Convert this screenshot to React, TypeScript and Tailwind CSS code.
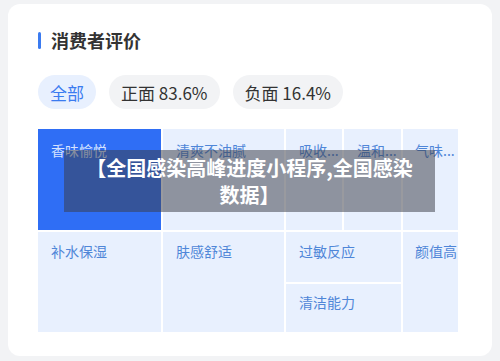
export default function App() {
  const font = { fontFamily: '"Noto Sans CJK SC", "Noto Sans", sans-serif' };
  return (
    <div className="w-[500px] h-[361px] bg-[#f2f3f5] pt-[4px] px-[8px] overflow-hidden" style={font}>
      <div className="relative w-[484px] h-[352px] bg-white rounded-[12px] pl-[30px] pt-[24px]">
        {/* Title */}
        <div className="flex items-center gap-[10px] h-[24px]">
          <span className="w-[3px] h-[17px] rounded-full bg-[#3b7bf0]" />
          <span className="text-[18px] font-semibold text-[#333] leading-none">消费者评价</span>
        </div>

        {/* Filter chips */}
        <div className="flex gap-[13px] mt-[23px] text-[17px] leading-none">
          <span className="h-[34px] px-[12px] flex items-center rounded-full bg-[#e8f0fe] text-[#3b7bf0]">全部</span>
          <span className="h-[34px] px-[12px] flex items-center rounded-full bg-[#f2f3f5] text-[#333]">正面 83.6%</span>
          <span className="h-[34px] px-[12px] flex items-center rounded-full bg-[#f2f3f5] text-[#333]">负面 16.4%</span>
        </div>

        {/* Treemap */}
        <div className="mt-[20px] w-[421px] h-[204px] grid grid-cols-[123px_121px_56px_57px_55px] grid-rows-[101px_50px_48px] gap-[2px] text-[14px] leading-none text-[#4f86d8]">
          <div className="bg-[#2f6ef5] text-[#d6e3ff] pl-[13px] pt-[14px]">香味愉悦</div>
          <div className="bg-[#e8f0fe] pl-[13px] pt-[14px]">清爽不油腻</div>
          <div className="bg-[#e8f0fe] pl-[13px] pt-[14px] whitespace-nowrap overflow-hidden">吸收...</div>
          <div className="bg-[#e8f0fe] pl-[13px] pt-[14px] whitespace-nowrap overflow-hidden">温和...</div>
          <div className="bg-[#e8f0fe] pl-[12px] pt-[14px] whitespace-nowrap overflow-hidden">气味...</div>
          <div className="row-span-2 bg-[#e8f0fe] pl-[13px] pt-[12px]">补水保湿</div>
          <div className="row-span-2 bg-[#e8f0fe] pl-[13px] pt-[12px]">肤感舒适</div>
          <div className="col-span-2 bg-[#e8f0fe] pl-[13px] pt-[12px]">过敏反应</div>
          <div className="row-span-2 bg-[#e8f0fe] pl-[12px] pt-[12px] whitespace-nowrap">颜值高</div>
          <div className="col-span-2 bg-[#e8f0fe] pl-[13px] pt-[11px]">清洁能力</div>
        </div>

        {/* Overlay caption */}
        <div className="absolute left-[56px] top-[146px] w-[371px] h-[62px] bg-[rgba(60,62,70,0.52)] flex items-center justify-center">
          <p className="w-[345px] text-center text-white font-bold text-[20px] leading-[27px]">
            【全国感染高峰进度小程序,全国感染数据】
          </p>
        </div>
      </div>
    </div>
  );
}
